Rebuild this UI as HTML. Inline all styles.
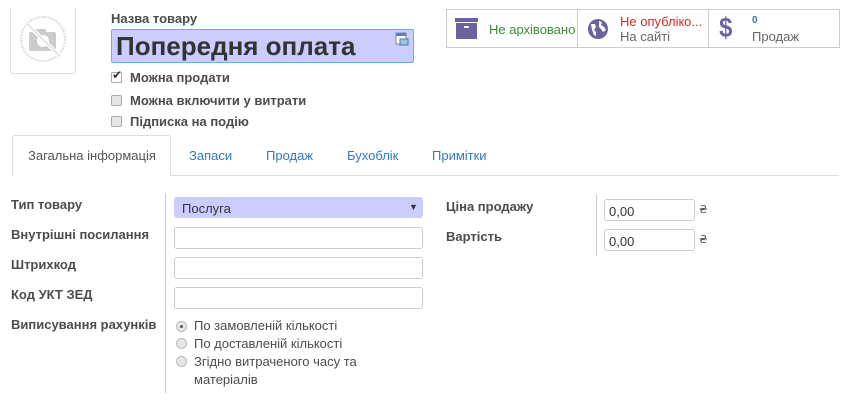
<!DOCTYPE html>
<html><head><meta charset="utf-8"><style>
*{box-sizing:border-box;margin:0;padding:0}
body{width:860px;height:400px;background:#fff;font-family:"Liberation Sans",sans-serif;font-size:13px;color:#4c4c4c;position:relative;overflow:hidden}
.a{position:absolute}
.b{font-weight:bold}
.inp{position:absolute;border:1px solid #ccc;border-radius:3px;background:#fff;height:22px}
.cb{position:absolute;width:11px;height:11px;border:1px solid #aaa;border-radius:2px;background:#e6e6e6}
.rd{position:absolute;width:11px;height:11px;border:1px solid #bbb;border-radius:50%;background:#e6e6e6}
.tab{position:absolute;top:148px;color:#337ab7;font-size:13px}
.uah{position:absolute;font-family:"DejaVu Sans",sans-serif;font-size:11px;color:#555}
</style></head><body>
<div class="a" style="left:10px;top:8px;width:66px;height:66px;border:1px solid #ddd;border-top:none;border-radius:0 0 3px 3px"></div>
<svg class="a" style="left:14px;top:10px" width="58" height="58" viewBox="0 0 58 58">
<circle cx="29" cy="29" r="22" fill="none" stroke="#ddd" stroke-width="2" stroke-dasharray="2 1"/>
<rect x="15" y="22" width="27" height="19" rx="2" fill="#ccc"/>
<rect x="22" y="19" width="10" height="5" fill="#ccc"/>
<circle cx="29" cy="31" r="6" fill="#fff"/>
<line x1="13" y1="14" x2="46" y2="46" stroke="#fff" stroke-width="4"/>
<line x1="13" y1="14" x2="46" y2="46" stroke="#ddd" stroke-width="1.5"/>
</svg>
<div class="a b" style="left:111px;top:11px;font-size:13px">Назва товару</div>
<div class="a" style="left:111px;top:29px;width:303px;height:34px;background:#ccccff;border:1px solid #66afe9;border-radius:2px"></div>
<div class="a b" style="left:116px;top:30px;font-size:26px;color:#333;line-height:32px">Попередня оплата</div>
<svg class="a" style="left:395px;top:32px" width="14" height="14" viewBox="0 0 14 14"><rect x="1" y="1" width="10" height="11" fill="#fff" stroke="#888"/><rect x="1" y="1" width="10" height="3" fill="#5b7fbf"/><rect x="5" y="7" width="8" height="6" fill="#9cc3e6" stroke="#4a78b0"/></svg>
<div class="cb" style="left:111px;top:72px;background:#fff"></div><div class="a" style="left:112px;top:68px;font-size:12px;color:#333">✔</div>
<div class="a b" style="left:130px;top:70px">Можна продати</div>
<div class="cb" style="left:111px;top:95px"></div>
<div class="a b" style="left:130px;top:93px">Можна включити у витрати</div>
<div class="cb" style="left:111px;top:116px"></div>
<div class="a b" style="left:130px;top:114px">Підписка на подію</div>

<div class="a" style="left:446px;top:9px;width:394px;height:39px;border:1px solid #ccc"></div>
<div class="a" style="left:577px;top:9px;width:1px;height:39px;background:#ccc"></div>
<div class="a" style="left:708px;top:9px;width:1px;height:39px;background:#ccc"></div>
<svg class="a" style="left:455px;top:18px" width="24" height="22" viewBox="0 0 24 22"><rect x="0" y="0" width="23" height="4" fill="#6a63a0"/><rect x="1" y="5" width="21" height="16" fill="#6a63a0"/><rect x="9" y="8" width="5" height="2" fill="#fff"/></svg>
<div class="a" style="left:489px;top:22px;color:#3c8a3c">Не архівовано</div>
<svg class="a" style="left:587px;top:18px" width="22" height="22" viewBox="0 0 22 22"><circle cx="11" cy="11" r="10" fill="#6a63a0"/><path d="M4 6 L8 6 L9 9 L7 12 L9 14 L9 18 L7 17 L5 12 Z M12 3 L15 4 L14 7 L17 9 L19 12 L16 14 L14 11 L12 9 Z" fill="#fff"/></svg>
<div class="a" style="left:620px;top:14px;color:#c9302c">Не опублікo...</div>
<div class="a" style="left:620px;top:29px;color:#666">На сайті</div>
<div class="a b" style="left:718px;top:10px;font-size:28px;color:#6a63a0;line-height:36px;transform:scaleX(.85)">$</div>
<div class="a b" style="left:752px;top:15px;font-size:10px;color:#337ab7">0</div>
<div class="a" style="left:752px;top:29px;color:#666">Продаж</div>

<div class="a" style="left:12px;top:175px;width:827px;height:1px;background:#ddd"></div>
<div class="a" style="left:12px;top:135px;width:159px;height:41px;border:1px solid #ddd;border-bottom:none;border-radius:3px 3px 0 0;background:#fff"></div>
<div class="tab" style="left:28px;color:#555">Загальна інформація</div>
<div class="tab" style="left:189px">Запаси</div>
<div class="tab" style="left:266px">Продаж</div>
<div class="tab" style="left:347px">Бухоблік</div>
<div class="tab" style="left:432px">Примітки</div>

<div class="a b" style="left:11px;top:197px">Тип товару</div>
<div class="a b" style="left:11px;top:227px">Внутрішні посилання</div>
<div class="a b" style="left:11px;top:257px">Штрихкод</div>
<div class="a b" style="left:11px;top:287px">Код УКТ ЗЕД</div>
<div class="a b" style="left:11px;top:317px">Виписування рахунків</div>
<div class="a" style="left:165px;top:193px;width:1px;height:200px;background:#ccc"></div>
<div class="a" style="left:174px;top:197px;width:249px;height:21px;background:#ccccff;border-radius:3px"></div>
<div class="a" style="left:182px;top:201px;color:#333">Послуга</div>
<div class="a" style="left:409px;top:202px;font-size:9px;color:#333">▼</div>
<div class="inp" style="left:174px;top:227px;width:249px"></div>
<div class="inp" style="left:174px;top:257px;width:249px"></div>
<div class="inp" style="left:174px;top:287px;width:249px"></div>
<div class="rd" style="left:176px;top:321px"></div><div class="a" style="left:180px;top:325px;width:3px;height:3px;background:#555;border-radius:50%"></div>
<div class="a" style="left:194px;top:318px">По замовленій кількості</div>
<div class="rd" style="left:176px;top:338px"></div>
<div class="a" style="left:194px;top:336px">По доставленій кількості</div>
<div class="rd" style="left:176px;top:356px"></div>
<div class="a" style="left:194px;top:354px">Згідно витраченого часу та</div>
<div class="a" style="left:194px;top:372px">матеріалів</div>

<div class="a b" style="left:446px;top:199px">Ціна продажу</div>
<div class="a b" style="left:446px;top:229px">Вартість</div>
<div class="a" style="left:596px;top:194px;width:1px;height:62px;background:#ccc"></div>
<div class="inp" style="left:604px;top:199px;width:91px"></div>
<div class="a" style="left:609px;top:204px;color:#333">0,00</div>
<div class="uah" style="left:699px;top:203px">₴</div>
<div class="inp" style="left:604px;top:229px;width:91px"></div>
<div class="a" style="left:609px;top:234px;color:#333">0,00</div>
<div class="uah" style="left:699px;top:233px">₴</div>
</body></html>
